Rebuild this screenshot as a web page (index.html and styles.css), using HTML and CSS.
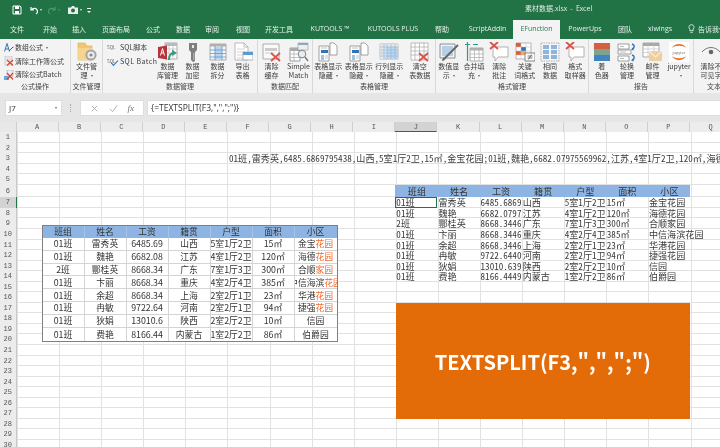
FILE: index.html
```html
<!DOCTYPE html>
<html lang="zh">
<head>
<meta charset="utf-8">
<title>素材数据.xlsx - Excel</title>
<link rel="stylesheet" href="styles.css">
</head>
<body>
<svg class="sprite" aria-hidden="true">
<defs>
<symbol id="folder" viewBox="0 0 20 20"><path d="M1 1h7l2 3h5v14H1z" fill="#f2c56f" stroke="#dcae58" stroke-width=".6"/><path d="M1 6h14v12H1z" fill="#f7d58f"/><circle cx="14" cy="13" r="5.6" fill="#a5a5a5"/><circle cx="14" cy="13" r="3.6" fill="#eee"/><circle cx="14" cy="13" r="1.6" fill="#8a8a8a"/></symbol>
<symbol id="dbm" viewBox="0 0 20 20"><path d="M7 1h12v16H7z" fill="#fff" stroke="#999" stroke-width=".8"/><path d="M7 1h12v3H7z" fill="#bbb"/><path d="M7 7h12M7 11h12M11 1v16M15 1v16" stroke="#bbb" stroke-width=".7"/><path d="M0 5l9-1.500v14L0 16z" fill="#b8343c"/><path d="M2.500 13.500l2-7 2 7M3.200 11h2.600" stroke="#fff" stroke-width="1" fill="none"/><path d="M11 18c0-5 2-7 5-7" stroke="#3d9a7a" stroke-width="2" fill="none"/><path d="M14 7.500l5 3.500-5 3z" fill="#3d9a7a"/></symbol>
<symbol id="key" viewBox="0 0 20 20"><path d="M6 1h8v7l-2 2v9l-2 1-2-2v-8L6 8z" fill="#7f7f7f"/><path d="M9 3h2v3H9z" fill="#e8e8e8"/><path d="M10 11h1.500v7H10z" fill="#aaa"/></symbol>
<symbol id="split" viewBox="0 0 20 20"><path d="M2 2h16v16H2z" fill="#f6f6f6" stroke="#999" stroke-width=".8"/><path d="M2 2h16v2.500H2z" fill="#b0b0b0"/><path d="M7 5h7v12H7z" fill="#bcd3ea"/><path d="M2 8h16M2 11.500h16M2 15h16M7 4v14M14 4v14" stroke="#5b9bd5" stroke-width=".8"/></symbol>
<symbol id="export" viewBox="0 0 20 20"><path d="M2 1h9l4 4v13H2z" fill="#fff" stroke="#aaa" stroke-width=".8"/><path d="M11 1v4h4" fill="none" stroke="#aaa" stroke-width=".8"/><path d="M4 7h8M4 10h8M4 13h8M4 16h8" stroke="#ccc" stroke-width=".8"/><path d="M10 10h10v8H10z" fill="#fff" stroke="#999" stroke-width=".7"/><path d="M10 10h10v3H10z" fill="#5b9bd5"/></symbol>
<symbol id="clearcache" viewBox="0 0 20 20"><path d="M1 2h16v15H1z" fill="#fafafa" stroke="#999" stroke-width=".8"/><path d="M3 6h12v3H3z" fill="#ccc"/><path d="M3 11h9" stroke="#ccc"/><path d="M9 11l9 8M18 11l-9 8" stroke="#d9534a" stroke-width="1.800"/></symbol>
<symbol id="match" viewBox="0 0 20 20"><path d="M1 6h10v13H1z" fill="#fff" stroke="#888" stroke-width=".8"/><path d="M1 6h10v3H1z" fill="#aaa"/><path d="M1 12h10M1 15.500h10M5 6v13" stroke="#aaa" stroke-width=".7"/><path d="M9 1h10v7H9z" fill="#eee" stroke="#999" stroke-width=".6"/><path d="M9 1h10v2H9z" fill="#8ca9c4"/><circle cx="13" cy="12" r="3.800" fill="#e4eef7" stroke="#777" stroke-width=".9"/><path d="M16 15l3 4" stroke="#777" stroke-width="1.400"/></symbol>
<symbol id="tablehide" viewBox="0 0 20 20"><path d="M1 4h10v15H1z" fill="#fff" stroke="#8a8a8a" stroke-width=".8"/><path d="M3 8h7v3H3z" fill="#2f75b5"/><path d="M3 13h3v5H3z" fill="#9dc3e6"/><path d="M3 6h6M7 14h3M7 16h3" stroke="#aaa" stroke-width=".7"/><path d="M12 1h4l3 3v9h-7z" fill="#fff" stroke="#8a8a8a" stroke-width=".8"/></symbol>
<symbol id="rowcol" viewBox="0 0 20 20"><path d="M1 2h18v15H1z" fill="#dbe7f3" stroke="#aaa" stroke-width=".8"/><path d="M1 2h18v3H1zM1 2h4v15H1z" fill="#e5e5e5"/><path d="M8 5h11v12H8z" fill="#bdd7ee"/><path d="M1 5h18M1 8h18M1 11h18M1 14h18M5 2v15M8 2v15M12 2v15M16 2v15" stroke="#8fb4d8" stroke-width=".6"/></symbol>
<symbol id="cleartable" viewBox="0 0 20 20"><path d="M1 1h17v17H1z" fill="#fff" stroke="#aaa" stroke-width=".8"/><path d="M1 5h17M1 9h17M1 13h17M5 1v17M9.500 1v17M14 1v17" stroke="#aaa" stroke-width=".7"/><path d="M9 11l9 8M18 11l-9 8" stroke="#d9534a" stroke-width="1.800"/></symbol>
<symbol id="valshow" viewBox="0 0 20 20"><path d="M1 2h15v14H1z" fill="#eef3f8" stroke="#777" stroke-width=".8"/><path d="M3 4h11v10H3z" fill="#b9cfe6"/><path d="M6 16L14 8l5-5" stroke="#666" stroke-width="2"/><path d="M3 19c2 0 3-1 4-3l-2-1c-1 1-2 2-2 4z" fill="#666"/></symbol>
<symbol id="merge" viewBox="0 0 20 20"><path d="M6 6h13v13H6z" fill="#fff" stroke="#999" stroke-width=".8"/><path d="M6 6h13v2.500H6z" fill="#b0b0b0"/><path d="M6 12h13M6 15.500h13M10.500 6v13M15 6v13" stroke="#aaa" stroke-width=".7"/><path d="M1 2.500h5M3.500 0v5M3.500 5v14M9 2.500h5" stroke="#2d9c8c" stroke-width="1.200"/></symbol>
<symbol id="noteclear" viewBox="0 0 20 20"><path d="M4 5h15v10H9l-3 4v-4H4z" fill="#fff" stroke="#aaa" stroke-width=".9"/><path d="M1 0l8 7M9 0L1 7" stroke="#d9534a" stroke-width="1.800"/></symbol>
<symbol id="keyword" viewBox="0 0 20 20"><path d="M1 1h15v16H1z" fill="#fff" stroke="#999" stroke-width=".7"/><path d="M1 1h5v4H1z" fill="#d9603f"/><path d="M6 5h5v4H6z" fill="#2f75b5"/><path d="M1 9h5v4H1z" fill="#d9603f"/><path d="M6 9h5v4H6z" fill="#f0a860"/><path d="M1 5h15M1 9h15M1 13h15M6 1v16M11 1v16" stroke="#bbb" stroke-width=".5"/><path d="M10 11h10v8H10z" fill="#fff" stroke="#666" stroke-width=".8"/><path d="M12.500 14h5M12.500 16h5M16.500 12.500l-3 5" stroke="#444" stroke-width=".7"/></symbol>
<symbol id="same" viewBox="0 0 20 20"><path d="M1 1h18v18H1z" fill="#f2f6fa" stroke="#999" stroke-width=".8" stroke-dasharray="1.500 1"/><path d="M3 3h6v4H3zM11 3h6v4h-6zM3 8h6v4H3zM11 8h6v4h-6zM3 13h6v4H3zM11 13h6v4h-6z" fill="#8fb5dc"/></symbol>
<symbol id="bands" viewBox="0 0 20 20"><path d="M2 1h16v6H2z" fill="#d5603f"/><path d="M2 7h16v6H2z" fill="#7ea38e"/><path d="M2 13h16v6H2z" fill="#3f84c4"/></symbol>
<symbol id="rotate" viewBox="0 0 20 20"><path d="M1 2h11v5H1zM1 8h13v4H1zM1 14h11v5H1z" fill="#fff" stroke="#888" stroke-width=".8"/><path d="M3 4.500h4M3 10h6M3 16.500h4" stroke="#bbb"/><path d="M15 2c3 1 3 4 0 5M15 13c3 1 3 4 0 5" fill="none" stroke="#2f75b5" stroke-width="1.400"/><path d="M14 7.500l2.500-2v3zM14 18.500l2.500-2v3z" fill="#2f75b5"/></symbol>
<symbol id="mail" viewBox="0 0 20 20"><path d="M1 1h16v14H1z" fill="#fff" stroke="#999" stroke-width=".8"/><path d="M1 1h16v3H1z" fill="#a8a8a8"/><path d="M1 7h16M1 10.500h16M6 1v14M12 1v14" stroke="#bbb" stroke-width=".6"/><path d="M7 9h13v10H7z" fill="#efcf9f"/><path d="M7 9l6.500 6L20 9" fill="none" stroke="#f9ecd6" stroke-width="1.200"/></symbol>
<symbol id="jupyter" viewBox="0 0 20 20"><path d="M0 0h20v20H0z" fill="#fff"/><path d="M3 6c2-5.500 12-5.500 14 0-3-3-11-3-14 0zM3 14c2 5.500 12 5.500 14 0-3 3-11 3-14 0z" fill="#e9742d"/><text x="10" y="11.500" font-size="4" text-anchor="middle" fill="#666" font-family="Open Sans">jupyter</text></symbol>
<symbol id="eye" viewBox="0 0 20 20"><path d="M1 10c5-6 13-6 18 0" fill="none" stroke="#777" stroke-width="1"/><circle cx="10" cy="10" r="2.300" fill="#666"/></symbol>
<symbol id="sheetx" viewBox="0 0 10 10"><path d="M1 0h7v9H1z" fill="#eee" stroke="#aaa" stroke-width=".5"/><path d="M2 2h5M2 4h5" stroke="#bbb" stroke-width=".5"/><path d="M3 4l6 5.500M9 4L3 9.500" stroke="#d9432f" stroke-width="1.200"/></symbol>
<symbol id="batchx" viewBox="0 0 10 10"><path d="M3 0h6v7H3z" fill="#eee" stroke="#999" stroke-width=".5"/><path d="M0 6h5v4H0z" fill="#6ea6dc"/><path d="M3 3l6 6.500M9 3L3 9.500" stroke="#d9432f" stroke-width="1.200"/></symbol>
<symbol id="formula" viewBox="0 0 10 10"><path d="M.5 8.500l2.500-8 2.500 8M1.500 6h3" fill="none" stroke="#2f75b5" stroke-width="1"/><path d="M5 8l4-4" stroke="#555" stroke-width="1"/><path d="M9 3l1 1-1 1z" fill="#e2923a"/></symbol>
</defs>
</svg>

<div class="app">
  <header class="title">
    <div class="qat">
      <svg class="q" viewBox="0 0 10 10"><path d="M1 1h7l1 1v7H1z" fill="none" stroke="#fff"/><path d="M3 1h4v3H3zM3 6h4v3H3z" fill="#fff"/></svg>
      <svg class="q q-undo" viewBox="0 0 10 10"><path d="M2 2v3h3M2.500 5C4 2.500 8 3 8.500 6c.2 1.500-.5 2.500-1.500 3" fill="none" stroke="#fff" stroke-width="1.200"/></svg>
      <span class="mini"></span>
      <svg class="q q-redo" viewBox="0 0 10 10"><path d="M8 2v3H5M7.500 5C6 2.500 2 3 1.500 6c-.2 1.500.5 2.500 1.500 3" fill="none" stroke="#4f9670" stroke-width="1.200"/></svg>
      <span class="mini mini-dim"></span>
      <svg class="q q-cam" viewBox="0 0 10 10"><path d="M0 2.500h3L4 1h2l1 1.500h3V9H0z" fill="#e8eee9"/><circle cx="5" cy="5.500" r="2" fill="#217346"/></svg>
      <span class="mini mini-cam"></span>
      <span class="custom"></span>
    </div>
    <div class="doc">素材数据.xlsx&nbsp; -&nbsp; Excel</div>
  </header>

  <nav class="tabs">
    <span>文件</span><span>开始</span><span>插入</span><span>页面布局</span><span>公式</span><span>数据</span><span>审阅</span><span>视图</span><span>开发工具</span><span>KUTOOLS ™</span><span>KUTOOLS PLUS</span><span>帮助</span><span>ScriptAddin</span><span class="on">EFunction</span><span>PowerUps</span><span>团队</span><span>xlwings</span>
    <span class="tip"><svg class="bulb" viewBox="0 0 8 12"><path d="M4 .8a3 3 0 0 0-2 5.300V8h4V6.100A3 3 0 0 0 4 .8zM2.500 10h3" fill="none" stroke="#fff" stroke-width=".9"/></svg>告诉我你想要做什么</span>
  </nav>

  <section class="ribbon">
    <div class="grp g1">
      <div class="body stack">
        <div class="sm"><svg class="si"><use href="#formula"/></svg>数组公式<i class="car"></i></div>
        <div class="sm"><svg class="si"><use href="#sheetx"/></svg>清除工作簿公式</div>
        <div class="sm"><svg class="si"><use href="#batchx"/></svg>清除公式Batch</div>
      </div>
      <div class="lbl">公式操作</div>
    </div>
    <div class="grp g2">
      <div class="body"><div class="btn"><svg class="li"><use href="#folder"/></svg><span>文件管<br>理<i class="car"></i></span></div></div>
      <div class="lbl">文件管理</div>
    </div>
    <div class="grp g3">
      <div class="body">
        <div class="stack sql">
          <div class="sm"><span class="sqltag">SQL</span>SQL脚本</div>
          <div class="sm"><span class="sqltag chk">SQL</span><span class="wide">SQL Batch</span></div>
        </div>
        <div class="btn"><svg class="li"><use href="#dbm"/></svg><span>数据<br>库管理</span></div>
        <div class="btn"><svg class="li"><use href="#key"/></svg><span>数据<br>加密</span></div>
        <div class="btn"><svg class="li"><use href="#split"/></svg><span>数据<br>拆分</span></div>
        <div class="btn"><svg class="li"><use href="#export"/></svg><span>导出<br>表格</span></div>
      </div>
      <div class="lbl">数据管理</div>
    </div>
    <div class="grp g4">
      <div class="body">
        <div class="btn"><svg class="li"><use href="#clearcache"/></svg><span>清除<br>缓存</span></div>
        <div class="btn"><svg class="li"><use href="#match"/></svg><span>Simple<br>Match</span></div>
      </div>
      <div class="lbl">数据匹配</div>
    </div>
    <div class="grp g5">
      <div class="body">
        <div class="btn"><svg class="li"><use href="#tablehide"/></svg><span>表格显示<br>隐藏<i class="car"></i></span></div>
        <div class="btn"><svg class="li"><use href="#tablehide"/></svg><span>表格显示<br>隐藏<i class="car"></i></span></div>
        <div class="btn"><svg class="li"><use href="#rowcol"/></svg><span>行列显示<br>隐藏<i class="car"></i></span></div>
        <div class="btn"><svg class="li"><use href="#cleartable"/></svg><span>清空<br>表数据</span></div>
      </div>
      <div class="lbl">表格管理</div>
    </div>
    <div class="grp g6">
      <div class="body">
        <div class="btn"><svg class="li"><use href="#valshow"/></svg><span>数值显<br>示<i class="car"></i></span></div>
        <div class="btn"><svg class="li"><use href="#merge"/></svg><span>合并填<br>充<i class="car"></i></span></div>
        <div class="btn"><svg class="li"><use href="#noteclear"/></svg><span>清除<br>批注</span></div>
        <div class="btn"><svg class="li"><use href="#keyword"/></svg><span>关键<br>词格式</span></div>
        <div class="btn"><svg class="li"><use href="#same"/></svg><span>相同<br>数据</span></div>
        <div class="btn"><svg class="li"><use href="#noteclear"/></svg><span>格式<br>取样器</span></div>
      </div>
      <div class="lbl">格式管理</div>
    </div>
    <div class="grp g7">
      <div class="body">
        <div class="btn"><svg class="li"><use href="#bands"/></svg><span>着<br>色器</span></div>
        <div class="btn"><svg class="li"><use href="#rotate"/></svg><span>轮换<br>管理</span></div>
        <div class="btn"><svg class="li"><use href="#mail"/></svg><span>邮件<br>管理</span></div>
        <div class="btn jup"><svg class="li"><use href="#jupyter"/></svg><span>jupyter<br><i class="car"></i></span></div>
      </div>
      <div class="lbl">报告</div>
    </div>
    <div class="grp g8">
      <div class="body">
        <div class="btn"><svg class="li"><use href="#eye"/></svg><span>清除不<br>可见字</span></div>
      </div>
      <div class="lbl">文本</div>
    </div>
  </section>

  <section class="fbar">
    <div class="name">J7<i class="car"></i></div>
    <div class="dots"></div>
    <div class="fx">
      <svg class="fi" viewBox="0 0 10 10"><path d="M2 2l6 6M8 2L2 8" stroke="#aaa" stroke-width="1"/></svg>
      <svg class="fi" viewBox="0 0 10 10"><path d="M1 5.500l3 3 5-7" fill="none" stroke="#aaa" stroke-width="1"/></svg>
      <em>fx</em>
    </div>
    <div class="input">{=TEXTSPLIT(F3,",",";")}</div>
  </section>

  <main class="sheet">
    <div class="row head"><b class="corner"></b><b>A</b><b>B</b><b>C</b><b>D</b><b>E</b><b>F</b><b>G</b><b>H</b><b>I</b><b class="sel">J</b><b>K</b><b>L</b><b>M</b><b>N</b><b>O</b><b>P</b><b>Q</b></div>
    <div class="rows">
      <div class="row"><b>1</b></div>
      <div class="row"><b>2</b></div>
      <div class="row"><b>3</b><span class="c f">01班,雷秀英,6485.6869795438,山西,5室1厅2卫,15㎡,金宝花园;01班,魏艳,6682.07975569962,江苏,4室1厅2卫,120㎡,海德花园;2班,酆桂英,8668.3446</span></div>
      <div class="row"><b>4</b></div>
      <div class="row"><b>5</b></div>
      <div class="row tall"><b>6</b><span class="c j th">班组</span><span class="c th">姓名</span><span class="c th">工资</span><span class="c th">籍贯</span><span class="c th">户型</span><span class="c th">面积</span><span class="c th">小区</span></div>
      <div class="row"><b class="sel">7</b><span class="c j cur">01班</span><span class="c">雷秀英</span><span class="c">6485.6869795438</span><span class="c">山西</span><span class="c">5室1厅2卫</span><span class="c">15㎡</span><span class="c">金宝花园</span></div>
      <div class="row"><b>8</b><span class="c j">01班</span><span class="c">魏艳</span><span class="c">6682.07975569962</span><span class="c">江苏</span><span class="c">4室1厅2卫</span><span class="c">120㎡</span><span class="c">海德花园</span></div>
      <div class="row"><b>9</b><span class="c j">2班</span><span class="c">酆桂英</span><span class="c">8668.3446128</span><span class="c">广东</span><span class="c">7室1厅3卫</span><span class="c">300㎡</span><span class="c">合顺家园</span></div>
      <div class="row"><b>10</b><span class="c j">01班</span><span class="c">卞丽</span><span class="c">8668.3446128</span><span class="c">重庆</span><span class="c">4室2厅4卫</span><span class="c">385㎡</span><span class="c over">中信海滨花园</span></div>
      <div class="row"><b>11</b><span class="c j">01班</span><span class="c">余超</span><span class="c">8668.3446128</span><span class="c">上海</span><span class="c">2室2厅1卫</span><span class="c">23㎡</span><span class="c">华港花园</span></div>
      <div class="row"><b>12</b><span class="c j">01班</span><span class="c">冉敏</span><span class="c">9722.6440128</span><span class="c">河南</span><span class="c">2室2厅1卫</span><span class="c">94㎡</span><span class="c">捷强花园</span></div>
      <div class="row"><b>13</b><span class="c j">01班</span><span class="c">狄娟</span><span class="c">13010.639128</span><span class="c">陕西</span><span class="c">2室2厅2卫</span><span class="c">10㎡</span><span class="c">信园</span></div>
      <div class="row"><b>14</b><span class="c j">01班</span><span class="c">费艳</span><span class="c">8166.4449128</span><span class="c">内蒙古</span><span class="c">1室2厅2卫</span><span class="c">86㎡</span><span class="c">伯爵园</span></div>
      <div class="row"><b>15</b></div>
      <div class="row"><b>16</b></div>
      <div class="row"><b>17</b></div>
      <div class="row"><b>18</b></div>
      <div class="row"><b>19</b></div>
      <div class="row"><b>20</b></div>
      <div class="row"><b>21</b></div>
      <div class="row"><b>22</b></div>
      <div class="row"><b>23</b></div>
      <div class="row"><b>24</b></div>
      <div class="row"><b>25</b></div>
      <div class="row"><b>26</b></div>
      <div class="row"><b>27</b></div>
      <div class="row"><b>28</b></div>
      <div class="row"><b>29</b></div>
      <div class="row"><b>30</b></div>
    </div>

    <div class="pic">
      <div class="pr ph"><span>班组</span><span>姓名</span><span>工资</span><span>籍贯</span><span>户型</span><span>面积</span><span>小区</span></div>
      <div class="pr"><span>01班</span><span>雷秀英</span><span>6485.69</span><span>山西</span><span>5室1厅2卫</span><span>15㎡</span><span>金宝<u>花园</u></span></div>
      <div class="pr"><span>01班</span><span>魏艳</span><span>6682.08</span><span>江苏</span><span>4室1厅2卫</span><span>120㎡</span><span>海德<u>花园</u></span></div>
      <div class="pr"><span>2班</span><span>酆桂英</span><span>8668.34</span><span>广东</span><span>7室1厅3卫</span><span>300㎡</span><span>合顺<u>家园</u></span></div>
      <div class="pr"><span>01班</span><span>卞丽</span><span>8668.34</span><span>重庆</span><span>4室2厅4卫</span><span>385㎡</span><span>中信海滨<u>花园</u></span></div>
      <div class="pr"><span>01班</span><span>余超</span><span>8668.34</span><span>上海</span><span>2室2厅1卫</span><span>23㎡</span><span>华港<u>花园</u></span></div>
      <div class="pr"><span>01班</span><span>冉敏</span><span>9722.64</span><span>河南</span><span>2室2厅1卫</span><span>94㎡</span><span>捷强<u>花园</u></span></div>
      <div class="pr"><span>01班</span><span>狄娟</span><span>13010.6</span><span>陕西</span><span>2室2厅2卫</span><span>10㎡</span><span>信园</span></div>
      <div class="pr"><span>01班</span><span>费艳</span><span>8166.44</span><span>内蒙古</span><span>1室2厅2卫</span><span>86㎡</span><span>伯爵园</span></div>
    </div>

    <div class="banner">TEXTSPLIT(F3,",",";")</div>
  </main>
</div>
</body>
</html>
```

FILE: styles.css
```css
* { box-sizing: border-box; }
html, body { margin: 0; height: 100%; overflow: hidden; background: #fff; }
body { font-family: "Noto Sans CJK SC", "Open Sans", sans-serif; color: #3c3c3c; }
.sprite { position: absolute; width: 0; height: 0; }
.app { width: 720px; height: 447px; overflow: hidden; display: flex; flex-direction: column; filter: blur(.25px); }

/* title bar */
.title { height: 20px; background: #217346; display: flex; align-items: center; position: relative; flex: none; }
.qat { display: flex; align-items: center; padding-left: 12px; }
.q { width: 10px; height: 10px; margin-right: 7px; }
.q-undo { margin-right: 1px; }
.q-redo { margin-right: 1px; }
.q-cam { margin-left: 3px; margin-right: 2px; }
.mini { width: 0; height: 0; border: 1.5px solid transparent; border-top: 2px solid #e8eee9; border-bottom: 0; margin-right: 5px; }
.mini-dim { border-top-color: #4f9670; }
.custom { width: 4px; height: 4px; border-top: 1px solid #fff; position: relative; }
.custom::after { content: ""; position: absolute; left: 0; top: 2px; border: 2px solid transparent; border-top: 2px solid #fff; border-bottom: 0; }
.doc { position: absolute; left: 525px; top: 2px; font-size: 7px; line-height: 12px; color: #dfeae3; white-space: nowrap; }

/* tabs */
.tabs { height: 19px; flex: none; background: #217346; display: grid; grid-template-columns: 34px 32px 26px 48px 26px 34px 24px 38px 34px 68px 58px 40px 51px 47px 50px 30px 40px 1fr; font-family: "Open Sans", "Noto Sans CJK SC", sans-serif; font-size: 7px; color: #e8f1ec; }
.tabs span { display: flex; align-items: center; justify-content: center; white-space: nowrap; padding-bottom: 2px; }
.tabs .on { background: #f3f3f3; color: #2b7a50; }
.tabs .tip { justify-content: flex-start; overflow: hidden; padding-left: 8px; }
.bulb { width: 7px; height: 10px; margin-right: 3px; flex: none; }

/* ribbon */
.ribbon { height: 54px; flex: none; background: #f3f3f3; display: flex; font-size: 7px; line-height: 9px; overflow: hidden; }
.grp { flex: none; display: flex; flex-direction: column; border-right: 1px solid #d8d8d8; }
.g1 { width: 71px; } .g2 { width: 32px; } .g3 { width: 155px; } .g4 { width: 55px; }
.g5 { width: 123px; } .g6 { width: 153px; } .g7 { width: 105px; } .g8 { width: 40px; border: 0; }
.body { flex: 1; display: flex; padding-top: 3px; justify-content: center; min-height: 0; }
.lbl { height: 11px; line-height: 9px; text-align: center; white-space: nowrap; color: #444; }
.stack { display: flex; flex-direction: column; justify-content: flex-start; gap: 4px; }
.g1 .stack { padding: 4px 0 0 4px; }
.g1 .body { justify-content: flex-start; }
.sm { display: flex; align-items: center; height: 9.500px; white-space: nowrap; }
.si { width: 10px; height: 10px; margin-right: 1px; flex: none; }
.car { display: inline-block; width: 0; height: 0; border: 1.5px solid transparent; border-top: 2px solid #666; border-bottom: 0; margin-left: 3px; vertical-align: middle; }
.btn { display: flex; flex-direction: column; align-items: center; text-align: center; white-space: nowrap; flex: 1 1 0; min-width: 0; }
.li { width: 20px; height: 20px; flex: none; }
.sql { width: 50px; flex: none; padding: 1px 0 0 2px; gap: 4px; }
.sqltag { font-size: 4.500px; width: 13px; color: #666; flex: none; position: relative; }
.chk::after { content: ""; position: absolute; left: 4px; top: 3px; width: 6px; height: 3px; border-left: 1.500px solid #2f75b5; border-bottom: 1.500px solid #2f75b5; transform: rotate(-45deg); }
.wide { letter-spacing: .45px; }
.g3 .body { padding-left: 2px; padding-right: 2px; }
.jup { flex: 1.100 1 0; }
.g8 .body { justify-content: flex-start; }
.g8 .btn { flex: none; width: 34px; }

/* formula bar */
.fbar { height: 29px; flex: none; background: #e6e6e6; display: flex; padding: 7px 0 6px 5px; font-family: "Open Sans", sans-serif; }
.name { width: 57px; background: #fff; border: 1px solid #ddd; font-size: 8px; line-height: 14px; padding-left: 3px; position: relative; color: #333; }
.name .car { position: absolute; right: 4px; top: 6px; }
.dots { width: 18px; position: relative; }
.dots::after { content: ""; position: absolute; left: 8px; top: 4px; height: 8px; border-left: 1px dotted #aaa; }
.fx { width: 64px; background: #fff; border: 1px solid #ddd; display: flex; align-items: center; justify-content: space-around; padding: 0 4px; }
.fi { width: 9px; height: 9px; }
.fx em { font-family: "Liberation Serif", serif; font-size: 9px; color: #777; }
.input { flex: 1; margin-left: 3px; background: #fff; border: 1px solid #ddd; border-right: 0; font-size: 8.500px; line-height: 14px; padding-left: 3px; color: #333; white-space: nowrap; }

/* sheet */
.sheet { flex: 1; position: relative; overflow: hidden; background: #fff; }
.row { display: grid; grid-template-columns: 16.500px repeat(17, 42.100px); height: 10.550px; border-bottom: 1px solid #e2e2e2; font-family: "Noto Sans Mono CJK SC", "Noto Sans CJK SC", monospace; font-feature-settings: "hwid"; font-size: 9.100px; line-height: 10px; color: #3a3a3a; white-space: nowrap; }
.row b { font-weight: 400; background: #ececec; color: #555; font-size: 7px; font-family: "Liberation Mono", monospace; text-align: center; border-right: 1px solid #c8c8c8; height: 11px; }
.rows { background-image: repeating-linear-gradient(90deg, #e2e2e2 0 1px, transparent 1px 42.100px); background-position: 16.500px 0; background-repeat: no-repeat; }
.row.head { height: 10px; border-bottom: 1px solid #bbb; background: #ececec; }
.head b { border-right: 1px solid #cfcfcf; line-height: 10px; height: 10px; }
.head .corner { background: #e8e8e8; }
.row b.sel { background: #d3d3d3; border-right-color: #217346; }
.head b.sel { border-right-color: #cfcfcf; border-bottom: 1px solid #217346; }
.tall { height: 12.600px; }
.tall b { height: 13px; line-height: 12px; }
.c { overflow: hidden; padding-left: 1px; }
.f { grid-column: 7 / -1; padding-left: 2px; }
.j { grid-column: 11; }
.th { background: #8db4e2; text-align: center; color: #333; line-height: 12px; height: 12.500px; }
.c:last-child { overflow: visible; }
.row > .f:last-child { overflow: hidden; }
.cur { outline: 1.500px solid #217346; outline-offset: -1px; position: relative; overflow: visible; }

/* pasted picture */
.pic { position: absolute; left: 41.500px; top: 102.500px; width: 296px; height: 117px; border: 1.500px solid #808080; background: #fff; display: grid; grid-template-rows: 12.500px repeat(8, 1fr); font-size: 8.800px; color: #333; }
.pr { display: grid; grid-template-columns: repeat(7, 1fr); border-bottom: 1px solid #d4d4d4; min-height: 0; }
.pr:last-child { border-bottom: 0; }
.ph { background: #8db4e2; border-bottom: 0; }
.pr span { display: flex; align-items: center; justify-content: center; white-space: nowrap; overflow: hidden; border-right: 1px solid #d4d4d4; min-width: 0; }
.ph span { border-right-color: #a6c4e8; }
.pr span:last-child { border-right: 0; }
.pr u { text-decoration: none; color: #f26a2e; }

/* orange caption */
.banner { position: absolute; left: 395.500px; top: 181px; width: 294.500px; height: 116px; background: #e36c09; color: #fff; font-family: "Noto Sans CJK SC", sans-serif; font-weight: 700; font-size: 20px; display: flex; align-items: center; justify-content: center; white-space: nowrap; }
```
